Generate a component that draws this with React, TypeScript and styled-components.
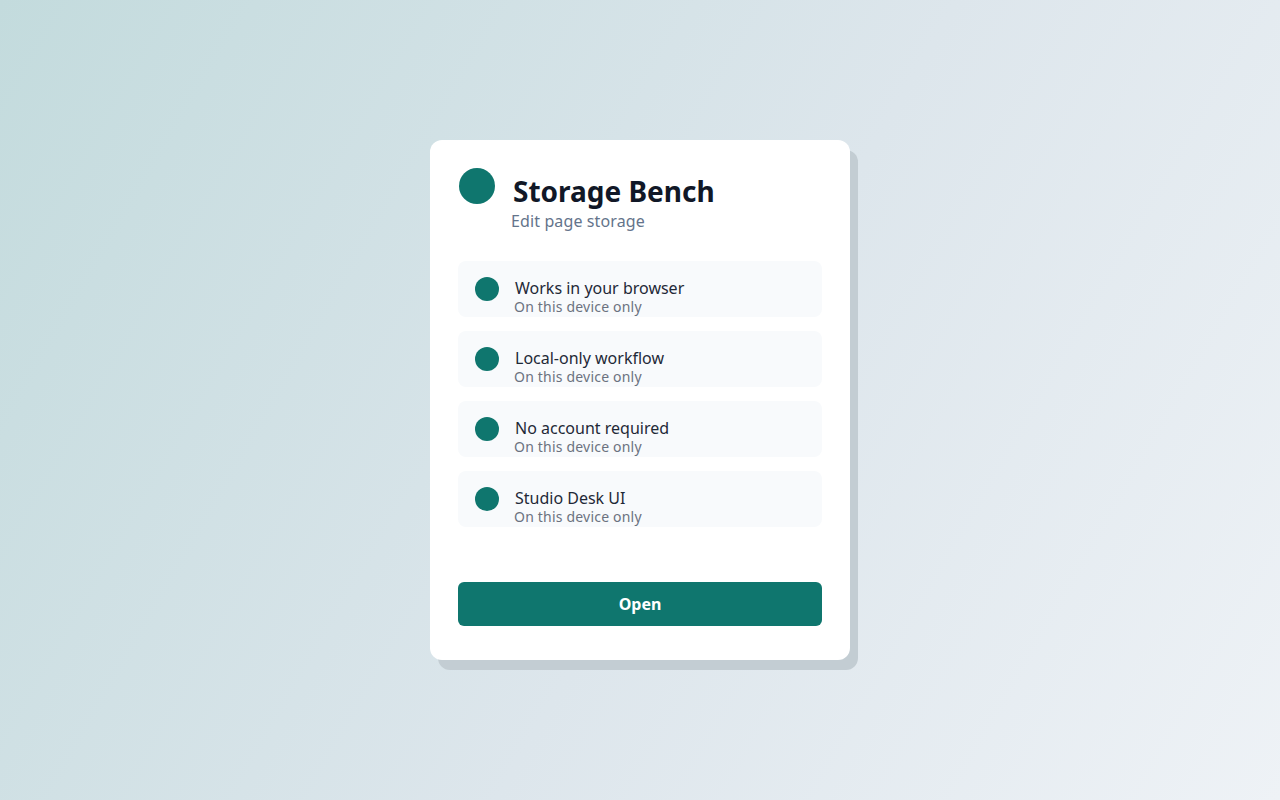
import { ReactElement } from 'react'
import styled, { createGlobalStyle } from 'styled-components'

const TEAL = '#0f766e'
const INK = '#111827'

const GlobalStyle = createGlobalStyle`
  * {
    box-sizing: border-box;
  }

  html,
  body {
    margin: 0;
    padding: 0;
    height: 100%;
  }

  body {
    font-family: 'Noto Sans', 'Open Sans', sans-serif;
    background: linear-gradient(120deg, #c3dbdd 0%, #dde6ec 55%, #eef2f6 100%);
  }

  #root {
    height: 100%;
  }
`

const Page = styled.main`
  display: flex;
  align-items: center;
  justify-content: center;
  width: 100%;
  height: 100vh;
`

const Card = styled.section`
  display: flex;
  flex-direction: column;
  width: 420px;
  height: 520px;
  padding: 28px 28px 34px;
  background: #ffffff;
  border-radius: 12px;
  box-shadow: 8px 10px 0 #c3cdd3;
`

const Header = styled.header`
  display: flex;
  align-items: flex-start;
  gap: 17px;
  padding-left: 1px;
`

const Dot = styled.span<{ size: number }>`
  flex: none;
  width: ${({ size }) => size}px;
  height: ${({ size }) => size}px;
  border-radius: 50%;
  background: ${TEAL};
`

const HeaderText = styled.div`
  display: flex;
  flex-direction: column;
  padding-top: 6px;
`

const Title = styled.h1`
  margin: 0 0 0 1px;
  font-size: 28px;
  line-height: 34px;
  font-weight: 700;
  color: ${INK};
`

const Subtitle = styled.p`
  margin: 2px 0 0 -1px;
  font-size: 16px;
  line-height: 22px;
  letter-spacing: 0.12px;
  color: #64748b;
`

const FeatureList = styled.ul`
  display: flex;
  flex-direction: column;
  gap: 14px;
  margin: 29px 0 0;
  padding: 0;
  list-style: none;
`

const FeatureRow = styled.li`
  display: flex;
  align-items: flex-start;
  gap: 16px;
  height: 56px;
  padding: 16px 16px 0 17px;
  background: #f8fafc;
  border-radius: 8px;
`

const FeatureText = styled.div`
  display: flex;
  flex-direction: column;
  margin-top: 1px;
`

const FeatureName = styled.span`
  font-size: 16px;
  line-height: 20px;
  color: #1f2937;
`

const FeatureNote = styled.span`
  margin-left: -1px;
  font-size: 14px;
  line-height: 18px;
  letter-spacing: 0.2px;
  color: #6b7280;
`

const OpenButton = styled.button`
  margin-top: auto;
  width: 100%;
  height: 44px;
  border: 0;
  border-radius: 6px;
  background: ${TEAL};
  color: #ffffff;
  font-family: inherit;
  font-size: 16px;
  font-weight: 700;
  cursor: pointer;
`

const features = [
  'Works in your browser',
  'Local-only workflow',
  'No account required',
  'Studio Desk UI',
]

const App = (): ReactElement => (
  <>
    <GlobalStyle />
    <Page>
      <Card>
        <Header>
          <Dot size={36} />
          <HeaderText>
            <Title>Storage Bench</Title>
            <Subtitle>Edit page storage</Subtitle>
          </HeaderText>
        </Header>
        <FeatureList>
          {features.map((name) => (
            <FeatureRow key={name}>
              <Dot size={24} />
              <FeatureText>
                <FeatureName>{name}</FeatureName>
                <FeatureNote>On this device only</FeatureNote>
              </FeatureText>
            </FeatureRow>
          ))}
        </FeatureList>
        <OpenButton>Open</OpenButton>
      </Card>
    </Page>
  </>
)

export default App
